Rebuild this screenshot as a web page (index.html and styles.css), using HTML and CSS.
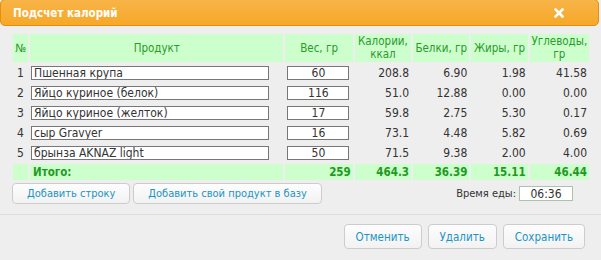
FILE: index.html
```html
<!DOCTYPE html>
<html lang="ru">
<head>
  <meta charset="UTF-8">
  <title>Подсчет калорий</title>
  <link rel="stylesheet" href="styles.css">
</head>
<body>
  <div class="dialog">
    <div class="titlebar">
      <span class="title">Подсчет калорий</span>
      <a href="#" class="close">
        <svg width="10" height="10" viewBox="0 0 10 10">
          <path d="M1.5 1.5 L8.5 8.5 M8.5 1.5 L1.5 8.5" stroke="#fff" stroke-width="2.6" stroke-linecap="square"/>
        </svg>
      </a>
    </div>

    <div class="content">
      <table class="calc">
        <thead>
          <tr>
            <th class="c-num">№</th>
            <th class="c-prod">Продукт</th>
            <th class="c-weight">Вес, гр</th>
            <th class="c-val">Калории,<br>ккал</th>
            <th class="c-val">Белки, гр</th>
            <th class="c-val">Жиры, гр</th>
            <th class="c-last">Углеводы,<br>гр</th>
          </tr>
        </thead>
        <tbody>
          <tr>
            <td class="num">1</td>
            <td><input class="prod" type="text" value="Пшенная крупа"></td>
            <td><input class="weight" type="text" value="60"></td>
            <td class="val">208.8</td><td class="val">6.90</td><td class="val">1.98</td><td class="val">41.58</td>
          </tr>
          <tr>
            <td class="num">2</td>
            <td><input class="prod" type="text" value="Яйцо куриное (белок)"></td>
            <td><input class="weight" type="text" value="116"></td>
            <td class="val">51.0</td><td class="val">12.88</td><td class="val">0.00</td><td class="val">0.00</td>
          </tr>
          <tr>
            <td class="num">3</td>
            <td><input class="prod" type="text" value="Яйцо куриное (желток)"></td>
            <td><input class="weight" type="text" value="17"></td>
            <td class="val">59.8</td><td class="val">2.75</td><td class="val">5.30</td><td class="val">0.17</td>
          </tr>
          <tr>
            <td class="num">4</td>
            <td><input class="prod" type="text" value="сыр Gravyer"></td>
            <td><input class="weight" type="text" value="16"></td>
            <td class="val">73.1</td><td class="val">4.48</td><td class="val">5.82</td><td class="val">0.69</td>
          </tr>
          <tr>
            <td class="num">5</td>
            <td><input class="prod" type="text" value="брынза AKNAZ light"></td>
            <td><input class="weight" type="text" value="50"></td>
            <td class="val">71.5</td><td class="val">9.38</td><td class="val">2.00</td><td class="val">4.00</td>
          </tr>
        </tbody>
        <tfoot>
          <tr>
            <td></td>
            <td class="total-label">Итого:</td>
            <td class="val">259</td>
            <td class="val">464.3</td>
            <td class="val">36.39</td>
            <td class="val">15.11</td>
            <td class="val">46.44</td>
          </tr>
        </tfoot>
      </table>

      <div class="tools">
        <button class="btn btn-small">Добавить строку</button>
        <button class="btn btn-small">Добавить свой продукт в базу</button>
        <label class="time">Время еды: <input type="text" value="06:36"></label>
      </div>
    </div>

    <div class="buttonpane">
      <button class="btn">Отменить</button>
      <button class="btn">Удалить</button>
      <button class="btn">Сохранить</button>
    </div>
  </div>
</body>
</html>
```

FILE: styles.css
```css
body {
  margin: 0;
  background-color: #eeeeee;
  font-family: "DejaVu Sans Condensed", "DejaVu Sans", Tahoma, sans-serif;
  font-size: 11px;
  color: #333;
}

.dialog {
  width: 601px;
  height: 260px;
  overflow: hidden;
}

.titlebar {
  display: flex;
  align-items: center;
  justify-content: space-between;
  height: 25px;
  margin: -1px 2px 0 0;
  padding: 0 34px 0 12px;
  background-color: #f6a828;
  background-image: linear-gradient(#f8b448, #f6a828);
  border: 1px solid #e78f08;
  border-radius: 5px;
  color: white;
  font-weight: bold;
  font-size: 11.5px;
}

.close {
  display: flex;
  margin-top: 1px;
}

.content {
  padding: 6px 12px 0 11px;
}

.calc {
  border-spacing: 2px;
  width: 580px;
}

.calc th {
  background-color: #ccffcc;
  color: #2b9a2b;
  font-weight: normal;
  font-size: 11.5px;
  height: 28px;
  padding: 0;
  line-height: 13px;
  white-space: nowrap;
}

.c-num { width: 15px; }
.c-prod { width: 252px; }
.c-weight { width: 67px; }
.c-val { width: 56px; }
.c-last { width: 59px; }

.calc td {
  height: 18px;
  padding: 0 2px;
  font-size: 12px;
}

.calc td.num {
  text-align: center;
}

.calc td.val {
  text-align: right;
}

input {
  font-family: inherit;
  font-size: 12px;
  color: #333;
  background: white;
  border: 1px solid #777;
  height: 14px;
  padding: 0 2px;
  margin: 0;
  box-sizing: border-box;
  display: block;
}

input.prod {
  width: 238px;
  margin-left: -1px;
}

input.weight {
  width: 62px;
  text-align: center;
}

.calc tfoot td {
  background-color: #ccffcc;
  color: #1f9a1f;
  height: 16px;
  font-weight: bold;
  font-size: 11.5px;
}

.calc tfoot td.total-label {
  padding-left: 3px;
}

.tools {
  display: flex;
  align-items: center;
  gap: 3px;
  margin-top: 1px;
  padding-left: 1px;
}

.btn {
  font-family: inherit;
  font-size: 11.5px;
  color: #1c94c4;
  background-color: #f6f6f6;
  background-image: linear-gradient(#fdfdfd, #f2f2f2);
  border: 1px solid #cccccc;
  border-radius: 4px;
  height: 25px;
  padding: 0 11px;
  cursor: pointer;
}

.btn-small {
  height: 21px;
  padding: 0 14px;
  font-size: 11px;
}

.time {
  margin-left: auto;
  margin-right: 16px;
  display: flex;
  align-items: center;
  gap: 3px;
  font-size: 11px;
}

.time input {
  flex: none;
  width: 54px;
  height: 15px;
  text-align: center;
  border-color: #a9c5a9;
}

.buttonpane {
  display: flex;
  justify-content: flex-end;
  gap: 6px;
  margin-top: 10px;
  padding: 9px 16px 0 0;
  border-top: 1px solid #dddddd;
}
```
